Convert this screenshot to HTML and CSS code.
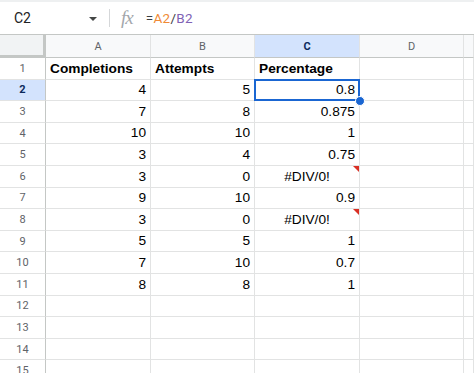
FILE: index.html
```html
<!DOCTYPE html>
<html lang="en">
<head>
    <meta charset="UTF-8">
    <title>Sheet</title>
    <link rel="stylesheet" href="styles.css">
</head>
<body>
    <div class="formula-bar">
        <div class="name-box">C2</div>
        <span class="caret"></span>
        <span class="divider"></span>
        <span class="fx">fx</span>
        <div class="formula">=<span class="ref-a">A2</span>/<span class="ref-b">B2</span></div>
    </div>

    <div class="sheet">
        <div class="corner"></div>
        <div class="col-head">A</div>
        <div class="col-head">B</div>
        <div class="col-head active">C</div>
        <div class="col-head">D</div>
        <div class="col-head"></div>

        <div class="row-head">1</div>
        <div class="cell bold">Completions</div>
        <div class="cell bold">Attempts</div>
        <div class="cell bold">Percentage</div>
        <div class="cell"></div>
        <div class="cell"></div>

        <div class="row-head active">2</div>
        <div class="cell num">4</div>
        <div class="cell num">5</div>
        <div class="cell num selected">0.8<span class="handle"></span></div>
        <div class="cell"></div>
        <div class="cell"></div>

        <div class="row-head">3</div>
        <div class="cell num">7</div>
        <div class="cell num">8</div>
        <div class="cell num">0.875</div>
        <div class="cell"></div>
        <div class="cell"></div>

        <div class="row-head">4</div>
        <div class="cell num">10</div>
        <div class="cell num">10</div>
        <div class="cell num">1</div>
        <div class="cell"></div>
        <div class="cell"></div>

        <div class="row-head">5</div>
        <div class="cell num">3</div>
        <div class="cell num">4</div>
        <div class="cell num">0.75</div>
        <div class="cell"></div>
        <div class="cell"></div>

        <div class="row-head">6</div>
        <div class="cell num">3</div>
        <div class="cell num">0</div>
        <div class="cell error">#DIV/0!<span class="flag"></span></div>
        <div class="cell"></div>
        <div class="cell"></div>

        <div class="row-head">7</div>
        <div class="cell num">9</div>
        <div class="cell num">10</div>
        <div class="cell num">0.9</div>
        <div class="cell"></div>
        <div class="cell"></div>

        <div class="row-head">8</div>
        <div class="cell num">3</div>
        <div class="cell num">0</div>
        <div class="cell error">#DIV/0!<span class="flag"></span></div>
        <div class="cell"></div>
        <div class="cell"></div>

        <div class="row-head">9</div>
        <div class="cell num">5</div>
        <div class="cell num">5</div>
        <div class="cell num">1</div>
        <div class="cell"></div>
        <div class="cell"></div>

        <div class="row-head">10</div>
        <div class="cell num">7</div>
        <div class="cell num">10</div>
        <div class="cell num">0.7</div>
        <div class="cell"></div>
        <div class="cell"></div>

        <div class="row-head">11</div>
        <div class="cell num">8</div>
        <div class="cell num">8</div>
        <div class="cell num">1</div>
        <div class="cell"></div>
        <div class="cell"></div>

        <div class="row-head">12</div>
        <div class="cell"></div><div class="cell"></div><div class="cell"></div><div class="cell"></div><div class="cell"></div>

        <div class="row-head">13</div>
        <div class="cell"></div><div class="cell"></div><div class="cell"></div><div class="cell"></div><div class="cell"></div>

        <div class="row-head">14</div>
        <div class="cell"></div><div class="cell"></div><div class="cell"></div><div class="cell"></div><div class="cell"></div>

        <div class="row-head">15</div>
        <div class="cell"></div><div class="cell"></div><div class="cell"></div><div class="cell"></div><div class="cell"></div>
    </div>
</body>
</html>
```

FILE: styles.css
```css
:root {
    --grid-line: #e2e3e3;
    --head-line: #c4c7c5;
    --head-bg: #f8f9fa;
    --head-text: #5f6368;
    --active-bg: #d3e3fd;
    --active-text: #0b2a5c;
    --select: #1a66d2;
}

* {
    margin: 0;
    padding: 0;
    box-sizing: border-box;
}

body {
    width: 474px;
    height: 373px;
    overflow: hidden;
    background: #ffffff;
    font-family: 'Liberation Sans', Arial, sans-serif;
    color: #000000;
}

/* formula bar */
.formula-bar {
    height: 34px;
    display: flex;
    align-items: center;
    border-top: 2px solid #eef0f1;
    font-family: Roboto, 'Liberation Sans', sans-serif;
}

.name-box {
    width: 89px;
    padding-left: 14px;
    font-size: 14px;
    color: #202124;
}

.caret {
    width: 0;
    height: 0;
    border-left: 4px solid transparent;
    border-right: 4px solid transparent;
    border-top: 4px solid #444746;
    margin-top: 1px;
}

.divider {
    width: 1px;
    height: 18px;
    background: #d5d7d9;
    margin-left: 12px;
}

.fx {
    margin-left: 11px;
    font-family: 'Liberation Serif', serif;
    font-style: italic;
    font-size: 19px;
    color: #a3a7ab;
    letter-spacing: -1px;
}

.formula {
    margin-left: 13px;
    font-size: 13.5px;
    color: #3c4043;
    letter-spacing: 0.3px;
}

.ref-a {
    color: #f08a36;
}

.ref-b {
    color: #8062b5;
}

/* grid */
.sheet {
    display: grid;
    grid-template-columns: 46px 105px 104px 105px 104px 1fr;
    grid-template-rows: 23px repeat(15, 21.6px);
    border-top: 1px solid var(--head-line);
}

.corner {
    background: #f1f3f4;
    border-right: 3px solid var(--head-line);
    border-bottom: 3px solid var(--head-line);
}

.col-head {
    display: flex;
    align-items: center;
    justify-content: center;
    background: var(--head-bg);
    border-right: 1px solid var(--grid-line);
    border-bottom: 1px solid var(--head-line);
    font-family: Roboto, 'Liberation Sans', sans-serif;
    font-size: 11px;
    color: var(--head-text);
}

.row-head {
    display: flex;
    align-items: center;
    justify-content: center;
    background: #ffffff;
    border-right: 1px solid var(--head-line);
    border-bottom: 1px solid var(--grid-line);
    font-family: Roboto, 'Liberation Sans', sans-serif;
    font-size: 11px;
    color: var(--head-text);
}

.col-head.active,
.row-head.active {
    background: var(--active-bg);
    color: var(--active-text);
    font-weight: 700;
}

.cell {
    position: relative;
    display: flex;
    align-items: flex-end;
    padding: 0 4px 2px 4px;
    border-right: 1px solid var(--grid-line);
    border-bottom: 1px solid var(--grid-line);
    font-size: 13.7px;
    line-height: 17px;
    white-space: nowrap;
}

.bold {
    font-weight: 700;
}

.num {
    justify-content: flex-end;
}

.error {
    justify-content: center;
}

.flag {
    position: absolute;
    top: 0;
    right: 0;
    width: 0;
    height: 0;
    border-top: 6px solid #d93025;
    border-left: 6px solid transparent;
}

.selected::before {
    content: '';
    position: absolute;
    top: -1px;
    left: -1px;
    right: -1px;
    bottom: -1px;
    border: 2px solid var(--select);
}

.handle {
    position: absolute;
    right: -6px;
    bottom: -6px;
    width: 10px;
    height: 10px;
    border-radius: 50%;
    background: var(--select);
    border: 1px solid #ffffff;
    z-index: 2;
}
```
